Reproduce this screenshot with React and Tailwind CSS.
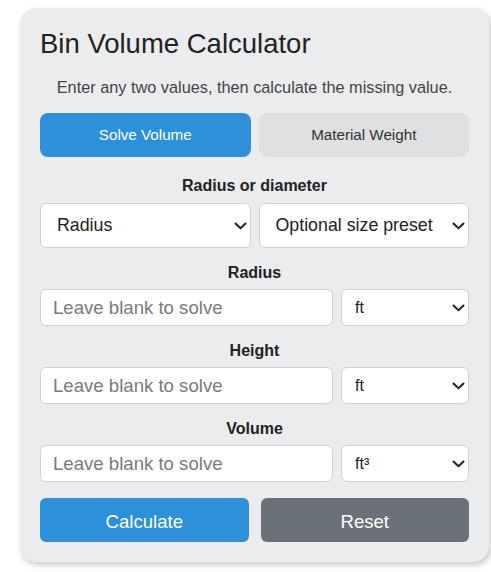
import React, { useState } from 'react';

const Chevron = () => (
    <svg
        className="pointer-events-none absolute right-[4px] top-1/2 -translate-y-1/2"
        width="13"
        height="8"
        viewBox="0 0 13 8"
        fill="none"
    >
        <path d="M1.5 1.5 L6.5 6.2 L11.5 1.5" stroke="#222" strokeWidth="2" strokeLinecap="round" strokeLinejoin="round" />
    </svg>
);

const Select = ({ value, options, className = '', textClass = 'text-[16px] pl-[13px]' }) => (
    <div className={`relative ${className}`}>
        <select
            defaultValue={value}
            className={`w-full h-full appearance-none bg-white border border-[#cfd1d3] rounded-[6px] pr-6 text-[#222] ${textClass} outline-none`}
        >
            {options.map((o) => (
                <option key={o}>{o}</option>
            ))}
        </select>
        <Chevron />
    </div>
);

const Field = ({ label, units }) => (
    <div className="mt-[15px]">
        <div className="text-center font-bold text-[16px] leading-[20px] text-[#222]">{label}</div>
        <div className="flex gap-2 mt-[6px]">
            <input
                type="text"
                placeholder="Leave blank to solve"
                className="w-[293px] h-[37px] bg-white border border-[#cfd1d3] rounded-[6px] px-3 text-[18.6px] text-[#222] placeholder:text-[#7a7a7a] outline-none"
            />
            <Select value={units[0]} options={units} className="flex-1 h-[37px]" />
        </div>
    </div>
);

export default function App() {
    const [mode, setMode] = useState('volume');

    return (
        <div className="bg-white min-h-[572px] pt-2 pl-5" style={{ fontFamily: '"Liberation Sans", Arial, sans-serif' }}>
            <div className="w-[469px] bg-[#ebeced] rounded-[16px] px-5 pt-5 pb-5 shadow-[2px_3px_6px_rgba(0,0,0,0.22)]">
                <h1 className="text-[27.5px] leading-[32px] text-[#222]">Bin Volume Calculator</h1>

                <p className="mt-[15px] text-center text-[16.3px] leading-[24px] text-[#444]">
                    Enter any two values, then calculate the missing value.
                </p>

                {/* Mode tabs */}
                <div className="flex gap-2 mt-[14px]">
                    <button
                        onClick={() => setMode('volume')}
                        className={`flex-1 h-[44px] rounded-[8px] text-[15.2px] ${mode === 'volume' ? 'bg-[#2d90d8] text-white' : 'bg-[#dfe0e1] text-[#333]'}`}
                    >
                        Solve Volume
                    </button>
                    <button
                        onClick={() => setMode('weight')}
                        className={`flex-1 h-[44px] rounded-[8px] text-[15.2px] ${mode === 'weight' ? 'bg-[#2d90d8] text-white' : 'bg-[#dfe0e1] text-[#333]'}`}
                    >
                        Material Weight
                    </button>
                </div>

                <div className="mt-[19px] text-center font-bold text-[16px] leading-[20px] text-[#222]">Radius or diameter</div>
                <div className="flex gap-2 mt-[7px]">
                    <Select
                        value="Radius"
                        options={['Radius', 'Diameter']}
                        className="flex-1 h-[45px]"
                        textClass="text-[17.8px] pl-[16px]"
                    />
                    <Select
                        value="Optional size preset"
                        options={['Optional size preset', '6 ft bin', '8 ft bin', '10 ft bin']}
                        className="flex-1 h-[45px]"
                        textClass="text-[17.8px] pl-[16px]"
                    />
                </div>

                <div className="mt-[1px]">
                    <Field label="Radius" units={['ft', 'in', 'm', 'cm']} />
                    <Field label="Height" units={['ft', 'in', 'm', 'cm']} />
                    <Field label="Volume" units={['ft³', 'yd³', 'm³', 'bu']} />
                </div>

                <div className="flex gap-3 mt-[16px]">
                    <button className="flex-1 h-[44px] pt-[3px] rounded-[6px] bg-[#2d90d8] text-white text-[18.6px]">Calculate</button>
                    <button className="flex-1 h-[44px] pt-[3px] rounded-[6px] bg-[#6b7178] text-white text-[18.6px]">Reset</button>
                </div>
            </div>
        </div>
    );
}
